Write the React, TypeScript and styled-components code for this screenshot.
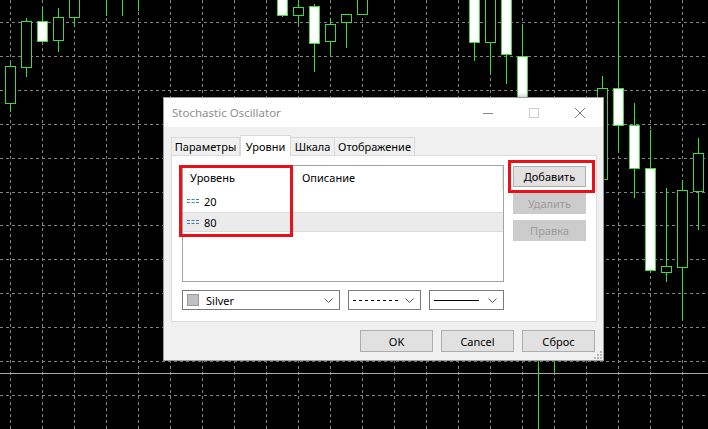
import styled, { createGlobalStyle } from "styled-components";

const GlobalStyle = createGlobalStyle`
  html, body {
    margin: 0;
    padding: 0;
    background: #000;
  }
  body {
    width: 708px;
    height: 429px;
    overflow: hidden;
    font-family: "Segoe UI", "Noto Sans", sans-serif;
  }
`;

const GREEN = "#3ddc3d";

type Candle = {
  k: number;
  hi: number;
  lo: number;
  top?: number;
  bot?: number;
  up?: boolean;
};

// bar k sits at x = 10 + 16k
const candles: Candle[] = [
  { k: 0, top: 66, bot: 103, hi: 62, lo: 112, up: false },
  { k: 1, top: 21, bot: 67, hi: 18, lo: 77, up: false },
  { k: 2, top: 21, bot: 41, hi: 7, lo: 41, up: true },
  { k: 3, top: 17, bot: 40, hi: 8, lo: 52, up: false },
  { k: 4, top: -3, bot: 17, hi: -3, lo: 27, up: false },
  { k: 6, hi: -3, lo: 16 },
  { k: 7, hi: -3, lo: 16 },
  { k: 8, hi: -3, lo: 11 },
  { k: 17, top: -3, bot: 15, hi: -3, lo: 17, up: true },
  { k: 18, top: 7, bot: 15, hi: -3, lo: 25, up: false },
  { k: 19, top: 6, bot: 43, hi: 4, lo: 72, up: true },
  { k: 20, top: 24, bot: 41, hi: 18, lo: 55, up: false },
  { k: 21, top: 14, bot: 22, hi: 14, lo: 48, up: false },
  { k: 22, top: -3, bot: 14, hi: -3, lo: 14, up: false },
  { k: 29, top: -3, bot: 42, hi: -3, lo: 61, up: true },
  { k: 30, top: -3, bot: 42, hi: -3, lo: 74, up: false },
  { k: 31, top: -3, bot: 54, hi: -3, lo: 84, up: true },
  { k: 32, top: 56, bot: 140, hi: 24, lo: 150, up: true },
  { k: 33, hi: 300, lo: 430 },
  { k: 34, hi: 300, lo: 372 },
  { k: 37, top: 88, bot: 179, hi: 76, lo: 200, up: false },
  { k: 38, top: 88, bot: 125, hi: -3, lo: 153, up: true },
  { k: 39, top: 125, bot: 168, hi: 103, lo: 198, up: true },
  { k: 40, top: 168, bot: 270, hi: 130, lo: 273, up: true },
  { k: 41, top: 266, bot: 272, hi: 188, lo: 282, up: false },
  { k: 42, top: 190, bot: 267, hi: 180, lo: 321, up: false },
  { k: 43, top: 153, bot: 191, hi: 138, lo: 230, up: false },
];

const gridX = Array.from({ length: 22 }, (_, i) => 10.5 + 32 * i);
const gridY = Array.from({ length: 13 }, (_, i) => Math.round(22 + 33.9 * i) + 0.5);

function Chart() {
  return (
    <ChartSvg width={708} height={429}>
      {gridX.map((x) => (
        <line key={"v" + x} x1={x} x2={x} y1={0} y2={429} stroke="#858585" strokeDasharray="3 3" />
      ))}
      {gridY.map((y) => (
        <line key={"h" + y} x1={0} x2={708} y1={y} y2={y} stroke="#858585" strokeDasharray="3 3" />
      ))}
      <line x1={0} x2={708} y1={373.5} y2={373.5} stroke="#a8a8a8" />
      {candles.map((c) => {
        const cx = 10 + 16 * c.k;
        return (
          <g key={c.k}>
            <line x1={cx + 0.5} x2={cx + 0.5} y1={c.hi} y2={c.lo} stroke={GREEN} />
            {c.top !== undefined && c.bot !== undefined && (
              <rect
                x={cx - 4.5}
                y={c.top + 0.5}
                width={10}
                height={c.bot - c.top}
                fill={c.up ? "#fff" : "#000"}
                stroke={GREEN}
              />
            )}
          </g>
        );
      })}
    </ChartSvg>
  );
}

function Chevron() {
  return (
    <svg width="9" height="5" viewBox="0 0 9 5">
      <path d="M0.5 0.5 L4.5 4.5 L8.5 0.5" fill="none" stroke="#555" />
    </svg>
  );
}

function LevelIcon() {
  return (
    <svg width="12" height="6" viewBox="0 0 12 6">
      <line x1="0" x2="12" y1="1.5" y2="1.5" stroke="#3f80b5" strokeDasharray="3 1.5" />
      <line x1="0" x2="12" y1="4.5" y2="4.5" stroke="#3f80b5" strokeDasharray="3 1.5" />
    </svg>
  );
}

const tabs = [
  { label: "Параметры", width: 69 },
  { label: "Уровни", width: 51, active: true },
  { label: "Шкала", width: 44 },
  { label: "Отображение", width: 80 },
];

export default function App() {
  return (
    <>
      <GlobalStyle />
      <Screen>
        <Chart />
        <Window>
          <TitleBar>
            <Title>Stochastic Oscillator</Title>
            <CaptionButton>
              <svg width="10" height="10" viewBox="0 0 10 10">
                <line x1="0" x2="10" y1="5.5" y2="5.5" stroke="#8a8a8a" />
              </svg>
            </CaptionButton>
            <CaptionButton>
              <svg width="10" height="10" viewBox="0 0 10 10">
                <rect x="0.5" y="0.5" width="9" height="9" fill="none" stroke="#cfcfcf" />
              </svg>
            </CaptionButton>
            <CaptionButton>
              <svg width="10" height="10" viewBox="0 0 10 10">
                <path d="M0 0 L10 10 M10 0 L0 10" stroke="#7a7a7a" />
              </svg>
            </CaptionButton>
          </TitleBar>

          <Body>
            <TabStrip>
              {tabs.map((t) => (
                <Tab key={t.label} $width={t.width} $active={!!t.active}>
                  {t.label}
                </Tab>
              ))}
            </TabStrip>

            <Panel>
              <LeftColumn>
                <LevelList>
                  <ListHeader>
                    <HeaderCell $width={112}>Уровень</HeaderCell>
                    <HeaderCell>Описание</HeaderCell>
                  </ListHeader>
                  <LevelRow>
                    <LevelIcon />
                    <span>20</span>
                  </LevelRow>
                  <LevelRow $selected>
                    <LevelIcon />
                    <span>80</span>
                  </LevelRow>
                </LevelList>

                <SelectRow>
                  <Select $width={158}>
                    <Swatch />
                    <SelectText>Silver</SelectText>
                    <Chevron />
                  </Select>
                  <Select $width={73}>
                    <svg width="46" height="3" viewBox="0 0 46 3">
                      <line x1="0" x2="46" y1="1.5" y2="1.5" stroke="#000" strokeDasharray="3 3" />
                    </svg>
                    <Chevron />
                  </Select>
                  <Select $width={75}>
                    <svg width="45" height="3" viewBox="0 0 45 3">
                      <line x1="0" x2="45" y1="1.5" y2="1.5" stroke="#000" />
                    </svg>
                    <Chevron />
                  </Select>
                </SelectRow>
              </LeftColumn>

              <ButtonColumn>
                <Button>Добавить</Button>
                <Button disabled>Удалить</Button>
                <Button disabled>Правка</Button>
              </ButtonColumn>

              <Mark $x={7} $y={9} $w={114} $h={72} />
              <Mark $x={336} $y={4} $w={87} $h={33} />
            </Panel>

            <Footer>
              <Button $wide>OK</Button>
              <Button $wide>Cancel</Button>
              <Button $wide>Сброс</Button>
            </Footer>
          </Body>

          <Grip>
            <svg width="8" height="8" viewBox="0 0 8 8">
              <rect x="6" y="0" width="2" height="2" fill="#b8b8b8" />
              <rect x="3" y="3" width="2" height="2" fill="#b8b8b8" />
              <rect x="6" y="3" width="2" height="2" fill="#b8b8b8" />
              <rect x="0" y="6" width="2" height="2" fill="#b8b8b8" />
              <rect x="3" y="6" width="2" height="2" fill="#b8b8b8" />
              <rect x="6" y="6" width="2" height="2" fill="#b8b8b8" />
            </svg>
          </Grip>
        </Window>
      </Screen>
    </>
  );
}

const Screen = styled.div`
  position: relative;
  width: 708px;
  height: 429px;
  background: #000;
  overflow: hidden;
`;

const ChartSvg = styled.svg`
  display: block;
`;

const Window = styled.div`
  position: absolute;
  left: 163px;
  top: 97px;
  width: 441px;
  height: 264px;
  box-sizing: border-box;
  border: 1px solid #9c9c9c;
  background: #f0f0f0;
  display: flex;
  flex-direction: column;
  box-shadow: 0 0 6px rgba(0, 0, 0, 0.35);
  font-size: 11px;
  color: #000;
`;

const TitleBar = styled.div`
  height: 29px;
  flex: none;
  background: #fff;
  display: flex;
  align-items: center;
`;

const Title = styled.span`
  flex: 1;
  padding-left: 8px;
  color: #8f8f8f;
  font-size: 11.5px;
`;

const CaptionButton = styled.div`
  width: 46px;
  height: 29px;
  display: flex;
  align-items: center;
  justify-content: center;
`;

const Body = styled.div`
  flex: 1;
  display: flex;
  flex-direction: column;
  padding: 8px 6px 0 7px;
`;

const TabStrip = styled.div`
  height: 20px;
  display: flex;
  align-items: flex-end;
`;

const Tab = styled.div<{ $width: number; $active: boolean }>`
  position: relative;
  z-index: ${(p) => (p.$active ? 2 : 0)};
  width: ${(p) => p.$width}px;
  height: ${(p) => (p.$active ? 21 : 18)}px;
  margin-bottom: ${(p) => (p.$active ? -1 : 0)}px;
  box-sizing: border-box;
  border: 1px solid #d9d9d9;
  border-bottom: none;
  border-left-width: ${(p) => (p.$active ? 1 : 0)}px;
  background: ${(p) => (p.$active ? "#fff" : "#f0f0f0")};
  display: flex;
  align-items: center;
  justify-content: center;
  white-space: nowrap;
  &:first-child {
    border-left-width: 1px;
  }
`;

const Panel = styled.div`
  position: relative;
  height: 167px;
  box-sizing: border-box;
  border: 1px solid #d9d9d9;
  background: #fff;
  display: flex;
  padding: 9px 0 0 10px;
  gap: 9px;
`;

const LeftColumn = styled.div`
  width: 322px;
  display: flex;
  flex-direction: column;
  gap: 8px;
`;

const LevelList = styled.div`
  height: 117px;
  box-sizing: border-box;
  border: 1px solid #a3a3a3;
  background: #fff;
`;

const ListHeader = styled.div`
  height: 24px;
  display: flex;
  align-items: center;
`;

const HeaderCell = styled.div<{ $width?: number }>`
  width: ${(p) => (p.$width ? `${p.$width}px` : "auto")};
  flex: ${(p) => (p.$width ? "none" : 1)};
  padding-left: 7px;
  box-sizing: border-box;
  border-right: ${(p) => (p.$width ? "none" : "1px solid #e5e5e5")};
  height: 24px;
  line-height: 24px;
`;

const LevelRow = styled.div<{ $selected?: boolean }>`
  height: 20px;
  box-sizing: border-box;
  display: flex;
  align-items: center;
  gap: 5px;
  padding-left: 4px;
  background: ${(p) => (p.$selected ? "#ebebeb" : "transparent")};
  border-top: 1px solid ${(p) => (p.$selected ? "#dcdcdc" : "transparent")};
  border-bottom: 1px solid ${(p) => (p.$selected ? "#dcdcdc" : "transparent")};
  margin-top: 1px;
`;

const SelectRow = styled.div`
  display: flex;
  align-items: center;
  justify-content: space-between;
`;

const Select = styled.div<{ $width: number }>`
  width: ${(p) => p.$width}px;
  height: 20px;
  box-sizing: border-box;
  border: 1px solid #7a7a7a;
  background: #fff;
  display: flex;
  align-items: center;
  justify-content: space-between;
  padding: 0 6px 0 4px;
`;

const Swatch = styled.span`
  width: 12px;
  height: 12px;
  box-sizing: border-box;
  background: #c0c0c0;
  border: 1px solid #9a9a9a;
  flex: none;
`;

const SelectText = styled.span`
  flex: 1;
  padding-left: 7px;
`;

const ButtonColumn = styled.div`
  display: flex;
  flex-direction: column;
  gap: 6px;
  padding-top: 1px;
`;

const Button = styled.button<{ $wide?: boolean }>`
  width: 73px;
  height: ${(p) => (p.$wide ? 22 : 21)}px;
  box-sizing: border-box;
  padding: 0;
  font-family: inherit;
  font-size: 11px;
  color: #000;
  background: #e1e1e1;
  border: 1px solid #adadad;
  &:disabled {
    background: #cccccc;
    border-color: #cccccc;
    color: #9b9b9b;
  }
`;

const Mark = styled.div<{ $x: number; $y: number; $w: number; $h: number }>`
  position: absolute;
  left: ${(p) => p.$x}px;
  top: ${(p) => p.$y}px;
  width: ${(p) => p.$w}px;
  height: ${(p) => p.$h}px;
  box-sizing: border-box;
  border: 3px solid #e8101a;
  pointer-events: none;
`;

const Footer = styled.div`
  display: flex;
  justify-content: flex-end;
  gap: 8px;
  margin-top: 8px;
  padding-right: 2px;
`;

const Grip = styled.div`
  position: absolute;
  right: 1px;
  bottom: 1px;
  width: 8px;
  height: 8px;
  display: flex;
`;
